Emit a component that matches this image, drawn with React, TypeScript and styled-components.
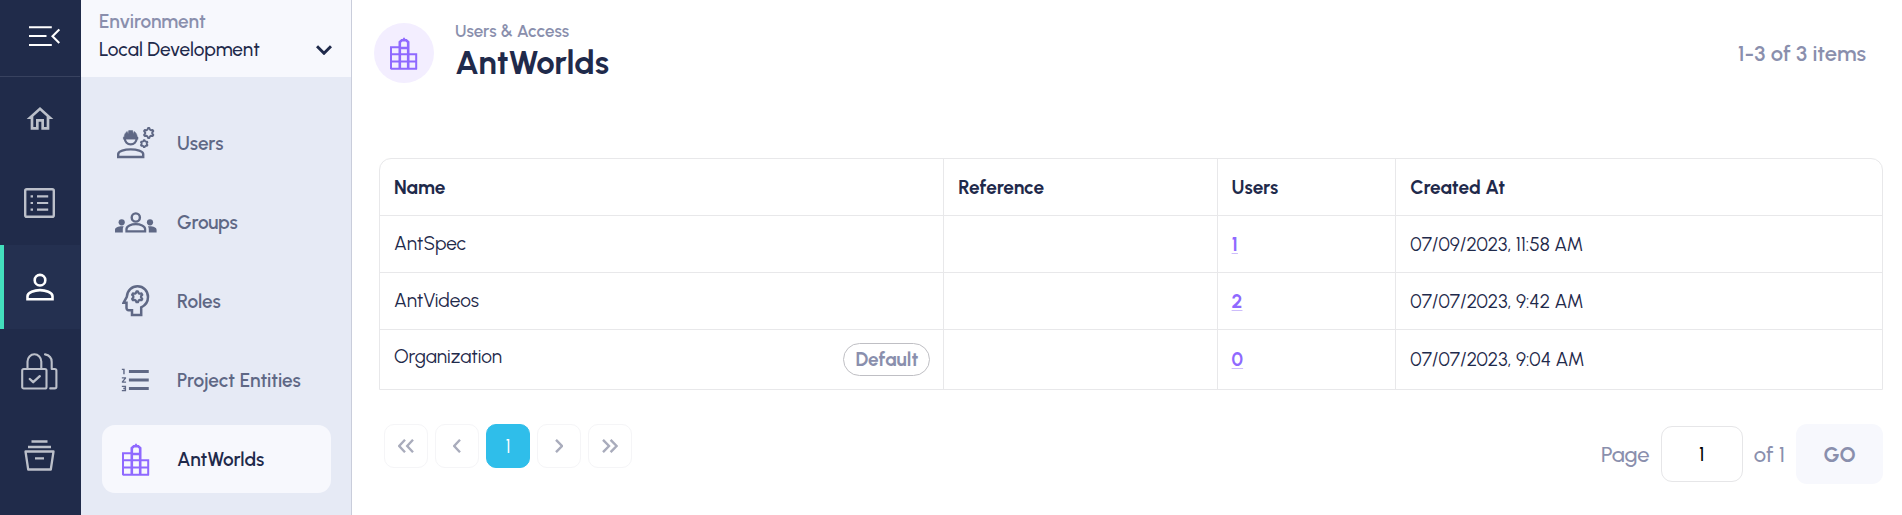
import React, { useState } from 'react';
import styled, { createGlobalStyle } from 'styled-components';
import { MdOutlineFormatListNumbered, MdOutlineHome } from 'react-icons/md';

const color = {
  rail: '#202b4a',
  railActive: '#243050',
  railLine: '#38425f',
  railIcon: '#bcc0ca',
  teal: '#43dfbd',
  ink: '#1f2a4b',
  nav: '#5f6885',
  muted: '#8a8fad',
  panel: '#e6eaf5',
  surface: '#f7f8fd',
  purple: '#8f69ff',
  lilac: '#f3eeff',
  line: '#e8e8ea',
  cyan: '#2fbeea',
};

const GlobalStyle = createGlobalStyle`
  *, *::before, *::after { box-sizing: border-box; }
  body {
    margin: 0;
    background: #fff;
    color: ${color.ink};
    font-family: Urbanist, Lato, "Liberation Sans", sans-serif;
  }
  button, input, select { font-family: inherit; }
  svg { display: block; flex: none; }
`;

const Page = styled.div`
  display: flex;
  min-height: 100vh;
`;

/* ---------- Icon rail ---------- */

const Rail = styled.nav`
  flex: none;
  width: 81px;
  padding-right: 1px;
  background: ${color.rail};
`;

const RailToggle = styled.button`
  display: flex;
  align-items: center;
  justify-content: center;
  width: 100%;
  height: 77px;
  padding: 0 0 4px 8px;
  border: 0;
  border-bottom: 1px solid ${color.railLine};
  background: none;
  color: #fff;
  cursor: pointer;
`;

const RailLink = styled.a<{ $active?: boolean }>`
  display: flex;
  align-items: center;
  justify-content: center;
  height: 84px;
  padding-right: 1px;
  color: ${(p) => (p.$active ? '#fff' : color.railIcon)};
  background: ${(p) => (p.$active ? color.railActive : 'transparent')};
  box-shadow: ${(p) => (p.$active ? `inset 4px 0 0 ${color.teal}` : 'none')};
`;

/* ---------- Section panel ---------- */

const Panel = styled.aside`
  flex: none;
  width: 271px;
  border-right: 1px solid #c9cddb;
  background: ${color.panel};
`;

const Environment = styled.div`
  display: grid;
  height: 77px;
  padding: 8px 19px 13px 18px;
  background: ${color.surface};
  font-size: 19px;
  line-height: 28px;
`;

const EnvironmentLabel = styled.label`
  color: ${color.muted};
  font-weight: 600;
`;

const SelectBox = styled.div`
  display: grid;
  align-items: center;
  > * { grid-area: 1 / 1; }
  svg { justify-self: end; pointer-events: none; }
`;

const Select = styled.select`
  appearance: none;
  width: 100%;
  height: 28px;
  padding: 0 24px 0 0;
  border: 0;
  background: none;
  color: ${color.ink};
  font-size: 19px;
  font-weight: 500;
  line-height: 28px;
`;

const NavList = styled.ul`
  display: flex;
  flex-direction: column;
  gap: 11px;
  margin: 0;
  padding: 32px 20px 20px 21px;
  list-style: none;
`;

const NavLink = styled.a<{ $active?: boolean }>`
  display: grid;
  grid-template-columns: 42px auto;
  align-items: center;
  column-gap: 20px;
  height: 68px;
  padding-left: 13px;
  border-radius: 13px;
  background: ${(p) => (p.$active ? color.surface : 'transparent')};
  color: ${(p) => (p.$active ? color.ink : color.nav)};
  font-size: 19px;
  font-weight: 600;
  text-decoration: none;
`;

const NavIcon = styled.span<{ $active?: boolean }>`
  display: flex;
  justify-content: center;
  color: ${(p) => (p.$active ? color.purple : 'inherit')};
`;

/* ---------- Content ---------- */

const Main = styled.main`
  flex: 1;
  min-width: 0;
  padding: 23px 19px 33px 27px;
`;

const Header = styled.header`
  display: flex;
  align-items: center;
  height: 60px;
  margin: 0 17px 75px -5px;
`;

const Emblem = styled.span`
  display: flex;
  align-items: center;
  justify-content: center;
  width: 60px;
  height: 60px;
  border-radius: 50%;
  background: ${color.lilac};
  color: ${color.purple};
`;

const Titles = styled.div`
  flex: 1;
  padding-left: 21px;
`;

const Section = styled.p`
  margin: 0;
  color: ${color.muted};
  font-size: 17px;
  font-weight: 600;
  line-height: 20px;
`;

const Title = styled.h1`
  margin: 0;
  font-size: 33px;
  font-weight: 700;
  line-height: 44px;
`;

const Count = styled.p`
  margin: 0;
  color: ${color.muted};
  font-size: 22px;
  font-weight: 600;
`;

const Table = styled.table`
  width: 100%;
  border: 1px solid ${color.line};
  border-radius: 12px 12px 0 0;
  border-spacing: 0;
  table-layout: fixed;
`;

const Column = styled.col<{ $share: number }>`
  width: ${(p) => p.$share}%;
`;

const HeadCell = styled.th`
  height: 56px;
  padding: 0 14px;
  font-size: 19px;
  font-weight: 700;
  text-align: left;
  & + & { border-left: 1px solid ${color.line}; }
`;

const Cell = styled.td`
  height: 57px;
  padding: 13px 13px 13px 14px;
  border-top: 1px solid ${color.line};
  font-size: 19px;
  & + & { border-left: 1px solid ${color.line}; }
`;

const NameLine = styled.div`
  display: flex;
  align-items: flex-start;
  justify-content: space-between;
  line-height: 28px;
`;

const Badge = styled.span`
  padding: 0 11px;
  border: 1px solid #bfbfc4;
  border-radius: 17px;
  color: ${color.muted};
  font-size: 19px;
  font-weight: 700;
  line-height: 31px;
`;

const CountLink = styled.a`
  color: ${color.purple};
  font-weight: 700;
  text-decoration: underline;
  text-decoration-color: #cdbdfb;
  text-decoration-thickness: 1px;
  text-underline-offset: 2px;
`;

/* ---------- Pagination ---------- */

const Footer = styled.footer`
  display: flex;
  align-items: flex-start;
  justify-content: space-between;
  padding: 34px 0 0 5px;
`;

const Pager = styled.nav`
  display: flex;
  gap: 7px;
`;

const PageButton = styled.button<{ $current?: boolean }>`
  display: flex;
  align-items: center;
  justify-content: center;
  width: 44px;
  height: 44px;
  padding: 0;
  border: 1px solid ${(p) => (p.$current ? color.cyan : '#f5f5f7')};
  border-radius: 10px;
  background: ${(p) => (p.$current ? color.cyan : '#fff')};
  color: ${(p) => (p.$current ? '#fff' : '#a9acbc')};
  font-size: 19px;
  cursor: pointer;
`;

const Jump = styled.form`
  display: flex;
  align-items: center;
  gap: 11px;
  color: ${color.muted};
  font-size: 22px;
  font-weight: 500;
`;

const PageInput = styled.input`
  width: 82px;
  height: 56px;
  padding: 0;
  border: 1px solid #e6e6e8;
  border-radius: 11px;
  color: #000;
  font-size: 19px;
  font-weight: 500;
  text-align: center;
`;

const GoButton = styled.button`
  width: 87px;
  height: 60px;
  border: 0;
  border-radius: 11px;
  background: ${color.surface};
  color: ${color.muted};
  font-size: 21px;
  font-weight: 700;
`;

/* ---------- Icons ---------- */

function gearPoints(cx: number, cy: number, r: number) {
  return Array.from({ length: 24 }, (_, i) => {
    const tooth = i % 4 < 2;
    const a = ((i * 15 - 97.5) * Math.PI) / 180;
    const d = tooth ? r : r * 0.7;
    return `${(cx + d * Math.cos(a)).toFixed(2)},${(cy + d * Math.sin(a)).toFixed(2)}`;
  }).join(' ');
}

const stroke = { fill: 'none', stroke: 'currentColor', strokeLinecap: 'round', strokeLinejoin: 'round' } as const;

const CollapseIcon = () => (
  <svg width="31" height="21" viewBox="0 0 31 21" fill="none" stroke="currentColor" strokeWidth="2.1" aria-hidden>
    <path d="M0 1.2h22.800M0 10h17.500M0 19h22.800M30.300 3.400L23.500 10.200l6.800 6.800" />
  </svg>
);

const ListIcon = () => (
  <svg width="31" height="30" viewBox="0 0 31 30" fill="none" stroke="currentColor" aria-hidden>
    <rect x="1.2" y="1.2" width="28.6" height="27.6" rx="1.6" strokeWidth="2.4" />
    <path d="M6.6 8.3h2.4M6.6 15h2.4M6.6 21.7h2.4M13 8.3h11.2M13 15h11.2M13 21.7h11.2" strokeWidth="2.2" />
  </svg>
);

const PersonIcon = () => (
  <svg width="28" height="28" viewBox="0 0 28 28" {...stroke} strokeWidth="2.6" aria-hidden>
    <circle cx="14" cy="7.2" r="5.3" />
    <path d="M1.5 26.3v-3.1c0-3.8 7-6.1 12.5-6.1s12.5 2.3 12.5 6.1v3.1z" strokeLinejoin="miter" />
  </svg>
);

const LocksIcon = () => (
  <svg width="37" height="37" viewBox="0 0 37 37" {...stroke} strokeWidth="2.1" aria-hidden>
    <rect x="1.2" y="16" width="24.3" height="19.5" rx="1.6" />
    <path d="M6.5 16V8.5a6.9 7.2 0 0 1 13.8 0V16" />
    <path d="M8.8 26l3.4 3.2 6.6-6" strokeWidth="2.4" />
    <path d="M24 1.4c4.2.8 6.7 3.8 6.7 7.6v7h3a1.7 1.7 0 0 1 1.7 1.7v16a1.7 1.7 0 0 1-1.7 1.7h-4.500" />
  </svg>
);

const ArchiveIcon = () => (
  <svg width="31" height="31" viewBox="0 0 31 31" fill="none" stroke="currentColor" strokeWidth="2.3" aria-hidden>
    <path d="M7.5 1.5h16M4 7h23M1.5 11.5h28l-2.7 18H4.2zM11 18.3h9" strokeLinejoin="round" />
  </svg>
);

const UsersIcon = () => (
  <svg width="38" height="32" viewBox="0 0 38 32" {...stroke} strokeWidth="2.4" aria-hidden>
    <path d="M1.2 30v-3c0-3 6.5-4.6 12.5-4.6s12.5 1.6 12.5 4.6v3z" strokeLinejoin="miter" />
    <path d="M7.800 11.500a5.900 5.900 0 0 0 11.800 0" strokeWidth="2.200" />
    <path d="M6.400 12V10h.8c0-2.700 1.300-4.600 3-5.600l1 2.600.5-3.400h4l.5 3.400 1-2.600c1.700 1 3 2.900 3 5.600h.8V12z" fill="currentColor" strokeWidth=".5" />
    <polygon points={gearPoints(31.7, 6, 5)} strokeWidth="1.9" />
    <polygon points={gearPoints(27.2, 16.7, 3.6)} strokeWidth="1.7" />
  </svg>
);

const GroupsIcon = () => (
  <svg width="42" height="21" viewBox="0 0 42 21" fill="none" stroke="currentColor" aria-hidden>
    <circle cx="20.8" cy="5.5" r="4.1" strokeWidth="2.4" />
    <path d="M11.500 19.300v-2.200c0-3 4.800-4.900 9.300-4.900s9.300 1.900 9.300 4.900v2.200z" strokeWidth="2.300" />
    <g fill="currentColor" stroke="none">
      <circle cx="6.7" cy="10.3" r="3.1" />
      <circle cx="35" cy="10.3" r="3.1" />
      <path d="M0 20.500v-2.600c0-2.600 3.900-4 8.700-3.600-.8 1.200-.9 2.400-.9 3.600v2.600zM41.600 20.500v-2.600c0-2.600-3.900-4-8.700-3.600.8 1.200.9 2.400.9 3.600v2.600z" />
    </g>
  </svg>
);

const RolesIcon = () => (
  <svg width="28" height="32" viewBox="0 0 28 32" {...stroke} strokeWidth="2.5" aria-hidden>
    <path d="M10 30v-4.700H6.700a2.200 2.200 0 0 1-2.200-2.200v-5.300H1.500l3.300-6C5.300 5.500 9.800 1.300 15.500 1.300c6 0 10.500 4.700 10.500 10.700 0 4.700-2.400 8.300-6.800 10.300V30z" strokeLinejoin="miter" />
    <polygon points={gearPoints(15.2, 11.8, 5.5)} strokeWidth="2.2" />
  </svg>
);

const CityIcon = () => (
  <svg width="28" height="33" viewBox="0 0 28 33" fill="none" stroke="currentColor" strokeWidth="2" aria-hidden>
    <path d="M1 10.300h8.500M1 17.300h25.500M1 24.500h25.500M1 31.700h26M1 9.300v23M26.200 16.300v16" />
    <path d="M9.800 32V5l2-1.800h4.400l2 1.800v27M9.500 11h9" strokeWidth="2.600" />
    <path d="M11.200 3.800L14 .3l2.800 3.500z" fill="currentColor" stroke="none" />
  </svg>
);

const ChevronDown = () => (
  <svg width="16" height="10" viewBox="0 0 16 10" fill="none" stroke={color.ink} strokeWidth="3" aria-hidden>
    <path d="M1 1.2l7 7 7-7" />
  </svg>
);

const Chevron = ({ right, double }: { right?: boolean; double?: boolean }) => {
  const width = double ? 16 : 8;
  return (
    <svg width={width} height="14" viewBox={`0 0 ${width} 14`} fill="none" stroke="currentColor" strokeWidth="2.4" aria-hidden>
      <path d={right ? 'M1 .8L7 7l-6 6.2' : 'M7 .8L1.2 7 7 13.2'} />
      {double && <path d={right ? 'M8.6 .8l6 6.2-6 6.2' : 'M15 .8L9.2 7l5.8 6.2'} />}
    </svg>
  );
};

/* ---------- Data ---------- */

const railItems = [
  { label: 'Home', icon: <MdOutlineHome size={32} /> },
  { label: 'Lists', icon: <ListIcon /> },
  { label: 'Users and access', icon: <PersonIcon />, active: true },
  { label: 'Security', icon: <LocksIcon /> },
  { label: 'Archive', icon: <ArchiveIcon /> },
];

const navItems = [
  { label: 'Users', icon: <UsersIcon /> },
  { label: 'Groups', icon: <GroupsIcon /> },
  { label: 'Roles', icon: <RolesIcon /> },
  { label: 'Project Entities', icon: <MdOutlineFormatListNumbered size={34} /> },
  { label: 'AntWorlds', icon: <CityIcon />, active: true },
];

const worlds = [
  { name: 'AntSpec', users: 1, created: '07/09/2023, 11:58 AM' },
  { name: 'AntVideos', users: 2, created: '07/07/2023, 9:42 AM' },
  { name: 'Organization', users: 0, created: '07/07/2023, 9:04 AM', isDefault: true },
];

export default function App() {
  const [page, setPage] = useState('1');

  return (
    <Page>
      <GlobalStyle />
      <Rail aria-label="Main">
        <RailToggle type="button" aria-label="Collapse menu">
          <CollapseIcon />
        </RailToggle>
        {railItems.map((item) => (
          <RailLink key={item.label} href="#" aria-label={item.label} $active={item.active}>
            {item.icon}
          </RailLink>
        ))}
      </Rail>

      <Panel>
        <Environment>
          <EnvironmentLabel htmlFor="environment">Environment</EnvironmentLabel>
          <SelectBox>
            <Select id="environment">
              <option>Local Development</option>
            </Select>
            <ChevronDown />
          </SelectBox>
        </Environment>
        <NavList>
          {navItems.map((item) => (
            <li key={item.label}>
              <NavLink href="#" $active={item.active}>
                <NavIcon $active={item.active}>{item.icon}</NavIcon>
                {item.label}
              </NavLink>
            </li>
          ))}
        </NavList>
      </Panel>

      <Main>
        <Header>
          <Emblem>
            <CityIcon />
          </Emblem>
          <Titles>
            <Section>Users &amp; Access</Section>
            <Title>AntWorlds</Title>
          </Titles>
          <Count>1-3 of 3 items</Count>
        </Header>

        <Table>
          <colgroup>
            <Column $share={37.5} />
            <Column $share={18.2} />
            <Column $share={11.9} />
            <Column $share={32.4} />
          </colgroup>
          <thead>
            <tr>
              <HeadCell>Name</HeadCell>
              <HeadCell>Reference</HeadCell>
              <HeadCell>Users</HeadCell>
              <HeadCell>Created At</HeadCell>
            </tr>
          </thead>
          <tbody>
            {worlds.map((world) => (
              <tr key={world.name}>
                <Cell>
                  <NameLine>
                    {world.name}
                    {world.isDefault && <Badge>Default</Badge>}
                  </NameLine>
                </Cell>
                <Cell />
                <Cell>
                  <CountLink href="#">{world.users}</CountLink>
                </Cell>
                <Cell>{world.created}</Cell>
              </tr>
            ))}
          </tbody>
        </Table>

        <Footer>
          <Pager aria-label="Pagination">
            <PageButton type="button" aria-label="First page"><Chevron double /></PageButton>
            <PageButton type="button" aria-label="Previous page"><Chevron /></PageButton>
            <PageButton type="button" $current aria-current="page">1</PageButton>
            <PageButton type="button" aria-label="Next page"><Chevron right /></PageButton>
            <PageButton type="button" aria-label="Last page"><Chevron right double /></PageButton>
          </Pager>
          <Jump onSubmit={(e) => e.preventDefault()}>
            <label htmlFor="page">Page</label>
            <PageInput id="page" inputMode="numeric" value={page} onChange={(e) => setPage(e.target.value)} />
            <span>of 1</span>
            <GoButton type="submit">GO</GoButton>
          </Jump>
        </Footer>
      </Main>
    </Page>
  );
}
